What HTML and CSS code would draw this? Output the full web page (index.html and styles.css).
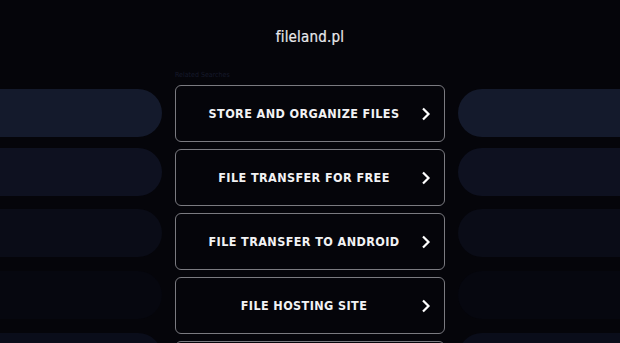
FILE: index.html
```html
<!DOCTYPE html>
<html lang="en">
  <head>
    <meta charset="UTF-8" />
    <meta name="viewport" content="width=device-width, initial-scale=1.0" />
    <title>fileland.pl</title>
    <link rel="stylesheet" href="styles.css">
  </head>
  <body>
    <div class="header">
      <h1>fileland.pl</h1>
    </div>

    <div class="stage">
      <div class="side side-left">
        <div class="pill p1"></div>
        <div class="pill p2"></div>
        <div class="pill p3"></div>
        <div class="pill p4"></div>
        <div class="pill p5"></div>
      </div>

      <div class="links">
        <div class="related">Related Searches</div>
        <a class="link" href="#">STORE AND ORGANIZE FILES<span class="chev"><svg viewBox="0 0 10 14" width="10" height="14"><path d="M2 1.5 L7.5 7 L2 12.5" fill="none" stroke="#fff" stroke-width="2.2"/></svg></span></a>
        <a class="link" href="#">FILE TRANSFER FOR FREE<span class="chev"><svg viewBox="0 0 10 14" width="10" height="14"><path d="M2 1.5 L7.5 7 L2 12.5" fill="none" stroke="#fff" stroke-width="2.2"/></svg></span></a>
        <a class="link" href="#">FILE TRANSFER TO ANDROID<span class="chev"><svg viewBox="0 0 10 14" width="10" height="14"><path d="M2 1.5 L7.5 7 L2 12.5" fill="none" stroke="#fff" stroke-width="2.2"/></svg></span></a>
        <a class="link" href="#">FILE HOSTING SITE<span class="chev"><svg viewBox="0 0 10 14" width="10" height="14"><path d="M2 1.5 L7.5 7 L2 12.5" fill="none" stroke="#fff" stroke-width="2.2"/></svg></span></a>
        <a class="link" href="#"></a>
      </div>

      <div class="side side-right">
        <div class="pill p1"></div>
        <div class="pill p2"></div>
        <div class="pill p3"></div>
        <div class="pill p4"></div>
        <div class="pill p5"></div>
      </div>
    </div>
  </body>
</html>
```

FILE: styles.css
```css
* {
  margin: 0;
  padding: 0;
  box-sizing: border-box;
}

body {
  background: #05050a;
  font-family: "DejaVu Sans Condensed", "DejaVu Sans", sans-serif;
  height: 343px;
  overflow: hidden;
}

.header {
  height: 73px;
  padding-top: 28px;
  text-align: center;
}

.header h1 {
  font-size: 15px;
  font-weight: normal;
  color: #e8e8ec;
  letter-spacing: 0.2px;
  -webkit-text-stroke: 0.2px #e8e8ec;
}

.stage {
  display: flex;
  gap: 13px;
  justify-content: center;
}

.side {
  flex: 1;
  display: flex;
  flex-direction: column;
  padding-top: 16px;
}

.pill {
  height: 48px;
  margin-bottom: 11px;
}

.side-left .pill {
  border-radius: 0 24px 24px 0;
}

.side-right .pill {
  border-radius: 24px 0 0 24px;
}

.p1 { background: #141a2c; }
.p2 { background: #0e1120; margin-bottom: 13px; }
.p3 { background: #0a0c17; margin-bottom: 14px; }
.p4 { background: #06070f; margin-bottom: 14px; }
.p5 { background: #0a0d1a; }

.links {
  width: 270px;
  flex: none;
  display: flex;
  flex-direction: column;
  gap: 7px;
}

.related {
  font-size: 7px;
  color: #161a2b;
  height: 5px;
  line-height: 5px;
}

.link {
  position: relative;
  display: flex;
  align-items: center;
  justify-content: center;
  height: 57px;
  flex: none;
  padding-right: 12px;
  border: 1.5px solid #7a7a80;
  border-radius: 6px;
  color: #f2f2f4;
  text-decoration: none;
  font-size: 12.5px;
  font-weight: bold;
  letter-spacing: 0.4px;
}

.chev {
  position: absolute;
  right: 13px;
  top: 50%;
  transform: translateY(-50%);
  display: flex;
}
```
